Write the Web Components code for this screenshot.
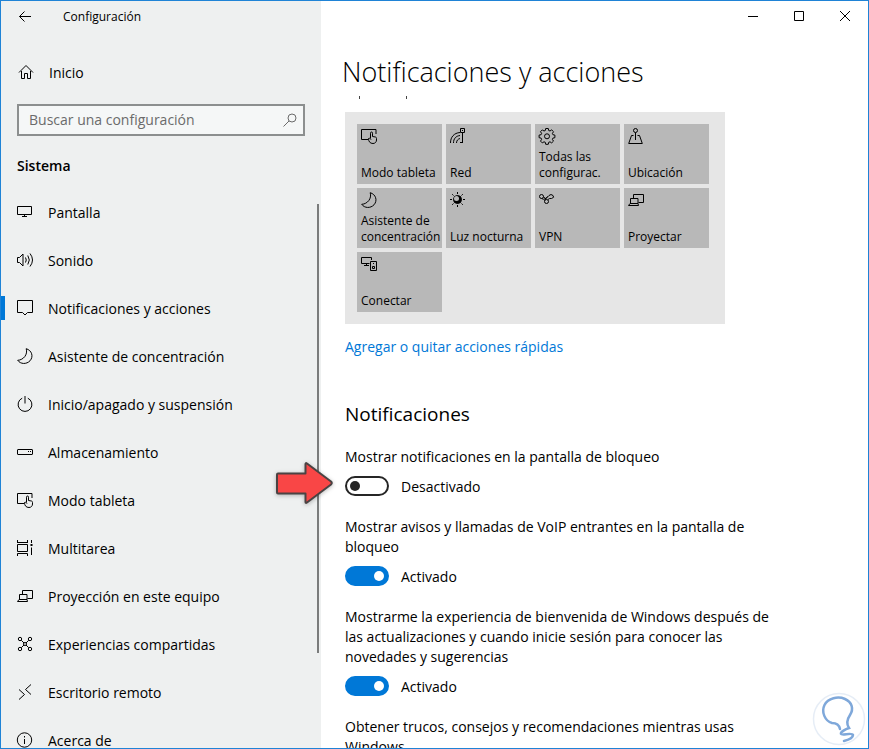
<!DOCTYPE html>
<html lang="es">
<head>
<meta charset="utf-8">
<title>Configuración</title>
<style>
  html, body { height: 100%; margin: 0; }
  body { font-family: "Open Sans", "Noto Sans", sans-serif; font-size: 14px; line-height: 20px; color: #000; overflow: hidden; }
</style>
</head>
<body>
<settings-window>
  <settings-sidebar slot="side">
    <nav-item icon="pantalla">Pantalla</nav-item>
    <nav-item icon="sonido">Sonido</nav-item>
    <nav-item icon="notificaciones" active>Notificaciones y acciones</nav-item>
    <nav-item icon="luna">Asistente de concentración</nav-item>
    <nav-item icon="energia">Inicio/apagado y suspensión</nav-item>
    <nav-item icon="disco">Almacenamiento</nav-item>
    <nav-item icon="tableta">Modo tableta</nav-item>
    <nav-item icon="multitarea">Multitarea</nav-item>
    <nav-item icon="proyectar">Proyección en este equipo</nav-item>
    <nav-item icon="compartir">Experiencias compartidas</nav-item>
    <nav-item icon="remoto">Escritorio remoto</nav-item>
    <nav-item icon="info">Acerca de</nav-item>
  </settings-sidebar>
  <settings-page heading="Notificaciones y acciones">
    <quick-panel>
      <quick-tile icon="tableta">Modo tableta</quick-tile>
      <quick-tile icon="red">Red</quick-tile>
      <quick-tile icon="ajustes">Todas las configurac.</quick-tile>
      <quick-tile icon="ubicacion">Ubicación</quick-tile>
      <quick-tile icon="luna">Asistente de concentración</quick-tile>
      <quick-tile icon="sol">Luz nocturna</quick-tile>
      <quick-tile icon="vpn">VPN</quick-tile>
      <quick-tile icon="proyectar">Proyectar</quick-tile>
      <quick-tile icon="conectar">Conectar</quick-tile>
    </quick-panel>
    <page-link>Agregar o quitar acciones rápidas</page-link>
    <settings-group heading="Notificaciones">
      <settings-toggle>Mostrar notificaciones en la pantalla de bloqueo</settings-toggle>
      <settings-toggle checked>Mostrar avisos y llamadas de VoIP entrantes en la pantalla de bloqueo</settings-toggle>
      <settings-toggle checked>Mostrarme la experiencia de bienvenida de Windows después de las actualizaciones y cuando inicie sesión para conocer las novedades y sugerencias</settings-toggle>
      <settings-toggle checked>Obtener trucos, consejos y recomendaciones mientras usas Windows</settings-toggle>
    </settings-group>
  </settings-page>
  <pointer-arrow slot="overlay"></pointer-arrow>
  <bulb-badge slot="overlay"></bulb-badge>
</settings-window>

<script>
const ICONS = {
  atras: '<path d="M14 7.500H2.500M7.500 2.500l-5 5 5 5"/>',
  inicio: '<path d="M1 8.500 8 1.500l7 7M3.500 7v7.500h3V9.500h3v5h3V7"/>',
  buscar: '<circle cx="10" cy="6" r="4"/><path d="M7 9 1.500 14.500"/>',
  pantalla: '<path d="M.5 2.500h14v8H.5zM7.500 11v1.500M5 12.500h5"/>',
  sonido: '<path d="M.5 5.500h2L6 2v12L2.500 10.500h-2zM8.500 5.500q1.500 2.500 0 5M10.800 3.500q3 4.500 0 9M13 1.500q5 6.500 0 13"/>',
  notificaciones: '<path d="M.5.5h15v12h-5L8 15 5.500 12.500h-5z"/>',
  luna: '<path d="M9.200.7C11 6.500 6.500 12 .7 12.300 3.500 16.300 9.500 16.500 13 12.800 16.800 8.500 14.800 2.300 9.200.7z"/>',
  energia: '<path d="M8 0v7.500M5.200 2.200a6.900 6.900 0 1 0 5.600 0"/>',
  disco: '<rect x=".5" y="5.500" width="15" height="5" rx=".5"/><path d="M11 7.500h1M13 7.500h1"/>',
  tableta: '<path d="M7 11.500H.5v-10h14.500v4.500"/><path d="M9.500 10.500V5.200q0-1.200 1-1.200t1 1.200V8.500l3 .5q1 .3 1 1.500v1.500c0 2-1.500 3.500-3.500 3.500-3 0-4.500-2-4.500-5 1.200-.7 2 .3 2.500 1"/>',
  multitarea: '<path d="M.5 0v3M10.500 0v3M.5 2.500h10M.5 4.500h10v7H.5zM.5 16v-2.500h10V16M14.500 0v3M14.500 7.500V15M13.500 5.500h2M13.500 4.500h2"/>',
  proyectar: '<path d="M5.500 6V2.500h10v8h-5M2.500 6.500h7.500v5H2.500zM.5 13.500l1.500-2h8l.500 2z"/>',
  compartir: '<circle cx="3" cy="3" r="1.700"/><circle cx="13" cy="3" r="1.700"/><circle cx="3" cy="13" r="1.700"/><circle cx="13" cy="13" r="1.700"/><circle cx="8" cy="8" r="1.500"/><path d="M4.300 4.300 7 7M11.700 4.300 9 7M4.300 11.700 7 9M11.700 11.700 9 9"/>',
  remoto: '<path d="M2 5.500 7.500 10.500l-5.500 5M14 .5 8.500 5.500 14 10.500"/>',
  info: '<circle cx="7.500" cy="8" r="7.200"/><path d="M7.500 4v1.500M7.500 7v5"/>',
  red: '<path d="M10.500.5h4v4h-4zM12 2.500h1M12.500 5v10M10 14.500h3M.5 15C.5 9 4 5 10 4.500M3.500 15c0-4.500 2.500-7 6.500-7.500M6.500 15c0-2.500 1.500-4 3.500-4.500"/>',
  ajustes: '<path d="M6.700.5h2.600l.4 2 1.300.5 1.700-1.100 1.800 1.800-1.100 1.700.5 1.300 2 .4v2.600l-2 .4-.5 1.300 1.100 1.700-1.800 1.800-1.700-1.100-1.300.5-.4 2H6.700l-.4-2-1.300-.5-1.700 1.100-1.800-1.800 1.100-1.700-.5-1.300-2-.4V7.100l2-.4.5-1.300L1.500 3.700l1.800-1.800L5 3l1.300-.5z"/><circle cx="8" cy="8.300" r="2.500"/>',
  ubicacion: '<circle cx="7.500" cy="2.500" r="2"/><path d="M7.500 4.500V12M5.500 7.500H3.500L.7 15.500h13.600L11.500 7.500H9.500"/>',
  sol: '<circle cx="7.500" cy="7.500" r="4" fill="currentColor"/><circle cx="6.500" cy="6.500" r="2.500" fill="#b8b8b8" stroke="none"/><path d="M7.500 0v2M7.500 13v2M0 7.500h2M13 7.500h2M2.200 2.200l1.300 1.300M11.500 11.500l1.300 1.300M2.200 12.800l1.300-1.300M11.500 3.500l1.300-1.300"/>',
  vpn: '<circle cx="2.500" cy="4.500" r="2"/><path d="M4.500 4.500Q6 7 7 6.500L10 3.500Q12 1.500 14 3.500T12.500 6.500Q10.500 6 9 7.500M2.500 6.500Q4.500 8 7 6.500M8.500 4.500 5.500 8.500"/><circle cx="7.500" cy="9.500" r="2"/>',
  conectar: '<path d="M10.500 4V1.500H.5v6h8M5.500 8v1.500M3 9.500h5M9.500 5.500h6v9h-6zM12 7.500h1M11.500 10.500h2v2h-2z"/>',
  minimizar: '<path d="M3 8.500h10"/>',
  maximizar: '<path d="M3.500 3.500h9v9h-9z"/>',
  cerrar: '<path d="M3 3l10 10M13 3 3 13"/>'
};

class Base extends HTMLElement {
  constructor() {
    super();
    this.attachShadow({ mode: 'open' });
  }
  connectedCallback() {
    this.shadowRoot.innerHTML = '<style>*{box-sizing:border-box}button{font:inherit;color:inherit;border:0;background:none;padding:0}' + this.css() + '</style>' + this.html();
  }
}
const define = (name, css, html) => customElements.define(name, class extends Base {
  css() { return css; }
  html() { return html(this); }
});

define('win-icon',
  ':host{display:block;flex:none;width:16px;height:16px}svg{display:block;overflow:visible}',
  el => `<svg width="16" height="16" viewBox="0 0 16 16" fill="none" stroke="currentColor" aria-hidden="true">${ICONS[el.getAttribute('name')]}</svg>`);

define('settings-window', `
  :host{display:grid;grid-template-columns:320px minmax(0,1fr);grid-template-rows:minmax(0,1fr);position:relative;
    box-sizing:border-box;height:100vh;border:1px solid #1f83d6;background:#fff;overflow:hidden}
  .col{min-width:0;overflow:hidden}`,
  () => `<div class="col"><slot name="side"></slot></div><div class="col"><slot></slot></div><slot name="overlay"></slot>`);

define('settings-sidebar', `
  :host{display:block;position:relative;height:100%;overflow:hidden;background:#eef0f0}
  header{display:flex;align-items:center;height:32px;padding-left:16px;gap:30px;font-size:12px}
  .home{display:flex;align-items:center;gap:15px;height:48px;margin-top:15px;padding-left:17px;color:inherit;text-decoration:none}
  .home span{padding-top:2px}
  .search{display:flex;align-items:center;height:32px;margin:8px 16px 0;padding:0 5px 0 10px;border:2px solid #8c8f8f;background:#f5f7f7;color:#6b6b6b}
  input{flex:1;min-width:0;border:0;padding:0;background:none;font:inherit;outline:0}
  input::placeholder{color:#6b6b6b;opacity:1}
  h2{margin:20px 16px 12px;font-size:14px;line-height:20px;font-weight:600}
  .bar{position:absolute;right:2px;top:203px;bottom:95px;width:2px;background:#7a7c7c}`,
  () => `<header><button aria-label="Atrás"><win-icon name="atras"></win-icon></button><span>Configuración</span></header>
  <a class="home" href="#inicio"><win-icon name="inicio"></win-icon><span>Inicio</span></a>
  <div class="search"><input type="text" aria-label="Buscar una configuración" placeholder="Buscar una configuración"><win-icon name="buscar"></win-icon></div>
  <h2>Sistema</h2><nav><slot></slot></nav><div class="bar"></div>`);

define('nav-item', `
  :host{display:block}
  a{display:flex;align-items:center;gap:15px;height:48px;padding-left:12px;border-left:4px solid transparent;color:inherit;text-decoration:none}
  span{padding-top:2px}
  :host([active]) a{border-image:linear-gradient(transparent 12px,#0078d7 12px,#0078d7 36px,transparent 36px) 0 0 0 4}`,
  el => `<a href="#${el.getAttribute('icon')}"${el.hasAttribute('active') ? ' aria-current="page"' : ''}><win-icon name="${el.getAttribute('icon')}"></win-icon><span><slot></slot></span></a>`);

define('settings-page', `
  :host{display:block}
  .caption{display:flex;justify-content:flex-end;height:32px}
  .caption button{display:grid;place-items:center;width:46px;height:30px}
  h1{margin:20px 21px 5px;font-size:27px;line-height:38px;font-weight:300}
  .cut{display:block;margin-left:24px;color:#000}
  main{padding:13px 24px 0}`,
  el => `<div class="caption"><button aria-label="Minimizar"><win-icon name="minimizar"></win-icon></button><button aria-label="Maximizar"><win-icon name="maximizar"></win-icon></button><button aria-label="Cerrar"><win-icon name="cerrar"></win-icon></button></div>
  <h1>${el.getAttribute('heading')}</h1>
  <svg class="cut" width="80" height="3" viewBox="0 0 80 3" stroke="#444" aria-hidden="true"><path d="M14.500 0v3M61.500 0v3"/></svg>
  <main><slot></slot></main>`);

define('quick-panel', `
  :host{display:grid;grid-template-columns:repeat(4,85px);grid-auto-rows:60px;gap:4px;box-sizing:border-box;max-width:380px;padding:12px;background:#e6e6e6}`,
  () => '<slot></slot>');

define('quick-tile', `
  :host{display:block}
  button{display:flex;flex-direction:column;justify-content:space-between;width:100%;height:100%;padding:4px 4px 3px;background:#b8b8b8;font-size:12px;line-height:16px;text-align:left}
  span{display:block}`,
  el => `<button><win-icon name="${el.getAttribute('icon')}"></win-icon><span><slot></slot></span></button>`);

define('page-link', `
  :host{display:block;margin-top:13px}a{color:#0078d7;text-decoration:none}`,
  () => '<a href="#acciones"><slot></slot></a>');

define('settings-group', `
  :host{display:block;margin-top:43px}
  h2{margin:0 0 19px;font-size:19px;line-height:28px;font-weight:400}
  div{display:grid;gap:20px;max-width:440px}`,
  el => `<h2>${el.getAttribute('heading')}</h2><div><slot></slot></div>`);

define('settings-toggle', `
  :host{display:block}
  label{display:block}
  .row{display:flex;align-items:center;gap:12px;margin-top:9px;padding-bottom:1px;height:21px}
  input{appearance:none;display:flex;align-items:center;width:44px;height:20px;margin:0;padding:0 3px;border:2px solid #262626;border-radius:10px;background:#fff}
  input::before{content:"";width:10px;height:10px;border-radius:5px;background:#262626}
  input:checked{justify-content:flex-end;border-color:#0078d7;background:#0078d7}
  input:checked::before{background:#fff}
  span{padding-top:2px}
  input:checked~.off,input:not(:checked)~.on{display:none}`,
  el => `<label for="t"><slot></slot></label><div class="row"><input id="t" type="checkbox" role="switch"${el.hasAttribute('checked') ? ' checked' : ''}><span class="on">Activado</span><span class="off">Desactivado</span></div>`);

define('pointer-arrow', `
  :host{position:absolute;left:272px;top:459px}svg{display:block;filter:drop-shadow(0 1px 2px #0004)}`,
  () => '<svg width="62" height="48" viewBox="0 0 62 48" aria-hidden="true"><path d="M5 13.500H32.500V4Q32.500 2.500 34 3.500L58 21.500Q59.500 23 58 24.500L34 42.500Q32.500 43.500 32.500 42V33.500H5Q4 33.500 4 32.500V14.500Q4 13.500 5 13.500z" fill="#f94646" stroke="#4a4343" stroke-width="2" stroke-linejoin="round"/></svg>');

define('bulb-badge', `
  :host{position:absolute;right:2px;bottom:2px}svg{display:block}`,
  () => '<svg width="54" height="54" viewBox="0 0 54 54" fill="none" aria-hidden="true"><circle cx="27" cy="27" r="25.500" fill="#fff" stroke="#e6edf6" stroke-width="1.500"/><path d="M28 37C27 32 24 31 20 31 13 29 9 20 12.500 13 16 6 26 4 33 7 40 10 42 17 38 23 34 29 35 33 37 36 34 37 28 40 29 42 30 44 40 40 41 43 41 46 36 48 32 49" stroke="#7fa8da" stroke-width="2.500" stroke-linecap="round"/></svg>');
</script>
</body>
</html>
